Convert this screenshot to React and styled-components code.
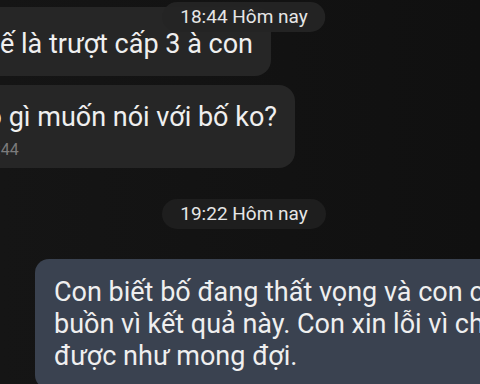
import React from 'react'
import styled, {createGlobalStyle} from 'styled-components'

const GlobalStyle = createGlobalStyle`
  html, body {
    margin: 0;
    padding: 0;
    background: #121212;
  }
  body {
    font-family: Roboto, "Noto Sans", "Liberation Sans", sans-serif;
  }
`

const messages = [
  {id: 1, lines: ['Thế là trượt cấp 3 à con']},
  {id: 2, lines: ['Có gì muốn nói với bố ko?'], time: '18:44'},
]

const sent = [
  'Con biết bố đang thất vọng và con cũng',
  'buồn vì kết quả này. Con xin lỗi vì chưa',
  'được như mong đợi.',
]

export default function App() {
  return (
    <>
      <GlobalStyle/>
      <Screen>
        <Thread>
          {messages.map((m, i) => (
            <Received key={m.id} first={i === 0} hasTime={!!m.time}>
              {m.lines.map((l) => <Line key={l}>{l}</Line>)}
              {m.time && <Meta>{m.time}</Meta>}
            </Received>
          ))}
          <DatePill>19:22 Hôm nay</DatePill>
          <Sent>
            {sent.map((l) => <Line key={l}>{l}</Line>)}
          </Sent>
        </Thread>
        {/* sticky date header that floats over the list */}
        <StickyPill>18:44 Hôm nay</StickyPill>
      </Screen>
    </>
  )
}

const Screen = styled.div`
  position: relative;
  width: 480px;
  height: 384px;
  overflow: hidden;
  background: linear-gradient(90deg, #151515 0%, #121212 60%, #101010 100%);
`

const Thread = styled.div`
  display: flex;
  flex-direction: column;
  align-items: flex-start;
  padding-top: 7px;
`

const Bubble = styled.div`
  color: #efefef;
  font-size: 27px;
  line-height: 32px;
  white-space: nowrap;
`

const Received = styled(Bubble)`
  margin-left: -49px;
  margin-top: ${(props) => (props.first ? '0' : '9px')};
  padding: ${(props) => (props.first ? '21px' : '16px')} 18px
    ${(props) => (props.hasTime ? '9px' : '16px')} 18px;
  background: #262626;
  border-radius: 16px;
`

const Sent = styled(Bubble)`
  margin-left: 35px;
  margin-top: 30px;
  padding: 17px 19px;
  background: #3a4250;
  border-radius: 14px;
`

const Line = styled.div``

const Meta = styled.div`
  margin-top: 8px;
  padding-left: 10px;
  font-size: 16px;
  line-height: 18px;
  color: #7c7c7c;
`

const Pill = styled.div`
  height: 30px;
  padding: 0 18px;
  border-radius: 15px;
  font-size: 19px;
  line-height: 30px;
  color: #e6e6e6;
  white-space: nowrap;
`

const DatePill = styled(Pill)`
  align-self: center;
  margin-top: 31px;
  margin-left: 8px;
  background: #1e1e1e;
`

const StickyPill = styled(Pill)`
  position: absolute;
  top: 2px;
  left: 50%;
  transform: translateX(calc(-50% + 4px));
  background: rgba(36, 36, 36, 0.96);
`
